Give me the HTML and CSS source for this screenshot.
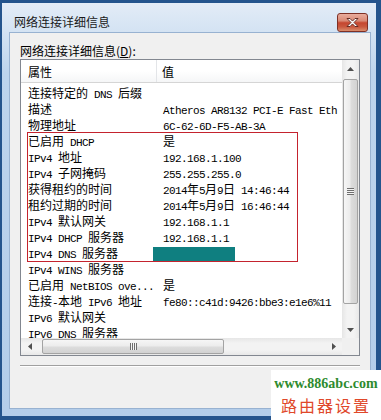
FILE: index.html
```html
<!DOCTYPE html>
<html>
<head>
<meta charset="utf-8">
<link rel="stylesheet" href="styles.css">
</head>
<body>
<div class="win">
  <div class="titlebar">
    <span class="title">网络连接详细信息</span>
    <span class="close">
      <svg width="13" height="11" viewBox="0 0 13 11"><path d="M1 1.5h3l2.5 2.6 2.5-2.6h3l-4 4 4 4h-3l-2.5-2.6-2.5 2.6h-3l4-4z" fill="#fff" stroke="#5a2018" stroke-width="0.9" stroke-linejoin="round"/></svg>
    </span>
  </div>
  <div class="client">
    <div class="label">网络连接详细信息(<u>D</u>):</div>
    <div class="lv">
      <div class="lv-main">
        <div class="lv-view">
          <div class="hdr"><div class="hc1">属性</div><div class="hc2">值</div></div>
          <div class="rows">
            <div class="row"><div class="c1">连接特定的<span class="m"> DNS </span>后缀</div><div class="c2"></div></div>
            <div class="row"><div class="c1">描述</div><div class="c2"><span class="m">Atheros AR8132 PCI-E Fast Eth</span></div></div>
            <div class="row"><div class="c1">物理地址</div><div class="c2"><span class="m">6C-62-6D-F5-AB-3A</span></div></div>
            <div class="row"><div class="c1">已启用<span class="m"> DHCP</span></div><div class="c2">是</div></div>
            <div class="row"><div class="c1"><span class="m">IPv4 </span>地址</div><div class="c2"><span class="m">192.168.1.100</span></div></div>
            <div class="row"><div class="c1"><span class="m">IPv4 </span>子网掩码</div><div class="c2"><span class="m">255.255.255.0</span></div></div>
            <div class="row"><div class="c1">获得租约的时间</div><div class="c2"><span class="m">2014</span>年<span class="m">5</span>月<span class="m">9</span>日<span class="m"> 14:46:44</span></div></div>
            <div class="row"><div class="c1">租约过期的时间</div><div class="c2"><span class="m">2014</span>年<span class="m">5</span>月<span class="m">9</span>日<span class="m"> 16:46:44</span></div></div>
            <div class="row"><div class="c1"><span class="m">IPv4 </span>默认网关</div><div class="c2"><span class="m">192.168.1.1</span></div></div>
            <div class="row"><div class="c1"><span class="m">IPv4 DHCP </span>服务器</div><div class="c2"><span class="m">192.168.1.1</span></div></div>
            <div class="row"><div class="c1"><span class="m">IPv4 DNS </span>服务器</div><div class="c2"><span class="redact"></span></div></div>
            <div class="row"><div class="c1"><span class="m">IPv4 WINS </span>服务器</div><div class="c2"></div></div>
            <div class="row"><div class="c1">已启用<span class="m"> NetBIOS ove...</span></div><div class="c2">是</div></div>
            <div class="row"><div class="c1">连接<span class="m">-</span>本地<span class="m"> IPv6 </span>地址</div><div class="c2"><span class="m">fe80::c41d:9426:bbe3:e1e6%11</span></div></div>
            <div class="row"><div class="c1"><span class="m">IPv6 </span>默认网关</div><div class="c2"></div></div>
            <div class="row"><div class="c1"><span class="m">IPv6 DNS </span>服务器</div><div class="c2"></div></div>
          </div>
          <div class="redbox"></div>
        </div>
        <div class="vscroll">
          <div class="arr"><svg width="7" height="4" viewBox="0 0 7 4"><path d="M0 4L3.5 0 7 4z" fill="#505050"/></svg></div>
          <div class="vtrack">
            <div class="vthumb"><span class="vgrip"></span></div>
          </div>
          <div class="arr"><svg width="7" height="4" viewBox="0 0 7 4"><path d="M0 0L3.5 4 7 0z" fill="#505050"/></svg></div>
        </div>
      </div>
      <div class="hrow">
        <div class="hscroll">
          <div class="arr"><svg width="4" height="7" viewBox="0 0 4 7"><path d="M4 0L0 3.5 4 7z" fill="#505050"/></svg></div>
          <div class="htrack">
            <div class="hthumb"><span class="hgrip"></span></div>
          </div>
          <div class="arr"><svg width="4" height="7" viewBox="0 0 4 7"><path d="M0 0L4 3.5 0 7z" fill="#505050"/></svg></div>
        </div>
        <div class="corner"></div>
      </div>
    </div>
    <div class="sep"></div>
  </div>
</div>
<div class="wm">
  <div class="wm1">www.886abc.com</div>
  <div class="wm2">路由器设置</div>
</div>
</body>
</html>
```

FILE: styles.css
```css
html, body {
  margin: 0;
  padding: 0;
}
body {
  width: 381px;
  height: 420px;
  overflow: hidden;
  position: relative;
  background: #24548d;
  font-family: "Noto Sans CJK SC", sans-serif;
  font-size: 12px;
  color: #000;
}
.win {
  box-sizing: border-box;
  width: 381px;
  height: 420px;
  border-style: solid;
  border-color: #24548d;
  border-width: 3px 5px 4px 2px;
  padding: 0 5px 7px 7px;
  background: linear-gradient(to bottom, #e3ecf7 0, #d4e3f3 28px, #bdd4ed 70px, #b3cdea 100%);
  display: flex;
  flex-direction: column;
}
.titlebar {
  height: 29px;
  flex: none;
  display: flex;
  justify-content: space-between;
  align-items: flex-start;
}
.title {
  padding: 11px 0 0 5px;
  line-height: 15px;
  color: #1a1a1a;
}
.close {
  margin: 10px 3px 0 0;
  width: 31px;
  height: 19px;
  box-sizing: border-box;
  border: 1px solid #7e3025;
  border-radius: 3px;
  background: linear-gradient(to bottom, #e9ac9d 0, #d98a76 40%, #c5462f 52%, #c9583e 75%, #da8d6c 100%);
  display: flex;
  align-items: center;
  justify-content: center;
}
.close svg { display: block; }
.client {
  flex: 1;
  background: #f0f0f0;
  border: 1px solid #98b2d1;
  padding: 9px 10px 0 10px;
  display: flex;
  flex-direction: column;
}
.label {
  height: 17px;
  line-height: 17px;
}
.lv {
  box-sizing: border-box;
  height: 297px;
  border: 1px solid #828790;
  background: #fff;
  display: flex;
  flex-direction: column;
}
.lv-main {
  display: flex;
  height: 278px;
}
.lv-view {
  flex: 1;
  position: relative;
  overflow: hidden;
}
.hdr {
  display: flex;
  height: 22px;
  border-bottom: 1px solid #d5d5d5;
  background: linear-gradient(to bottom, #ffffff 0, #ffffff 50%, #f5f6f7 100%);
}
.hc1 {
  box-sizing: border-box;
  width: 136px;
  padding: 2px 0 0 7px;
  line-height: 20px;
  border-right: 1px solid #e3e5e8;
}
.hc2 {
  padding: 2px 0 0 5px;
  line-height: 20px;
}
.rows {
  padding-top: 2px;
}
.row {
  display: flex;
  height: 16px;
  line-height: 16px;
  white-space: nowrap;
}
.c1 {
  box-sizing: border-box;
  width: 136px;
  flex: none;
  padding-left: 7px;
  overflow: hidden;
}
.c2 {
  position: relative;
  padding-left: 6px;
  white-space: nowrap;
}
.m {
  font-family: "Liberation Mono", monospace;
  font-size: 11px;
  letter-spacing: -0.6px;
}
.redact {
  position: absolute;
  left: -4px;
  top: 2px;
  width: 82px;
  height: 14px;
  background: #0f7f80;
}
.redbox {
  position: absolute;
  left: 6px;
  top: 72px;
  width: 271px;
  height: 130px;
  box-sizing: border-box;
  border: 1px solid #c4232e;
}
.vscroll {
  width: 17px;
  flex: none;
  display: flex;
  flex-direction: column;
  background: linear-gradient(to right, #e6e6e6 0, #f3f3f3 30%, #f3f3f3 70%, #e8e8e8 100%);
}
.arr {
  width: 17px;
  height: 17px;
  flex: none;
  display: flex;
  align-items: center;
  justify-content: center;
}
.arr svg { display: block; }
.vtrack {
  flex: 1;
  padding-top: 2px;
  display: flex;
  flex-direction: column;
  align-items: center;
}
.vthumb {
  box-sizing: border-box;
  width: 15px;
  height: 225px;
  border: 1px solid #a3a3a3;
  border-radius: 2px;
  background: linear-gradient(to right, #f6f6f6 0, #ececec 45%, #dcdcdc 55%, #d2d2d2 100%);
  display: flex;
  align-items: center;
  justify-content: center;
}
.vgrip {
  width: 7px;
  height: 7px;
  background: repeating-linear-gradient(to bottom, #6e6e6e 0, #6e6e6e 1px, #f4f4f4 1px, #f4f4f4 2px);
}
.hrow {
  display: flex;
  height: 17px;
}
.hscroll {
  flex: 1;
  display: flex;
  background: linear-gradient(to bottom, #e6e6e6 0, #f3f3f3 30%, #f3f3f3 70%, #e8e8e8 100%);
}
.htrack {
  flex: 1;
  padding-left: 4px;
  display: flex;
  align-items: center;
}
.hthumb {
  box-sizing: border-box;
  width: 182px;
  height: 15px;
  border: 1px solid #a3a3a3;
  border-radius: 2px;
  background: linear-gradient(to bottom, #f6f6f6 0, #ececec 45%, #dcdcdc 55%, #d2d2d2 100%);
  display: flex;
  align-items: center;
  justify-content: center;
}
.hgrip {
  width: 7px;
  height: 7px;
  background: repeating-linear-gradient(to right, #6e6e6e 0, #6e6e6e 1px, #f4f4f4 1px, #f4f4f4 2px);
}
.corner {
  width: 17px;
  background: #f0f0f0;
}
.sep {
  margin-top: 9px;
  height: 0;
  border-top: 1px solid #a0a0a0;
  border-bottom: 1px solid #ffffff;
}
.wm {
  position: absolute;
  left: 271px;
  top: 370px;
  width: 110px;
  height: 50px;
  background: #fff;
  text-align: center;
}
.wm1 {
  margin-top: 6px;
  font-family: "Liberation Serif", serif;
  font-weight: bold;
  font-size: 14px;
  line-height: 16px;
  color: #2e8b2e;
}
.wm2 {
  margin-top: 3px;
  font-size: 16px;
  line-height: 20px;
  letter-spacing: 2px;
  color: #e0482a;
}
```
